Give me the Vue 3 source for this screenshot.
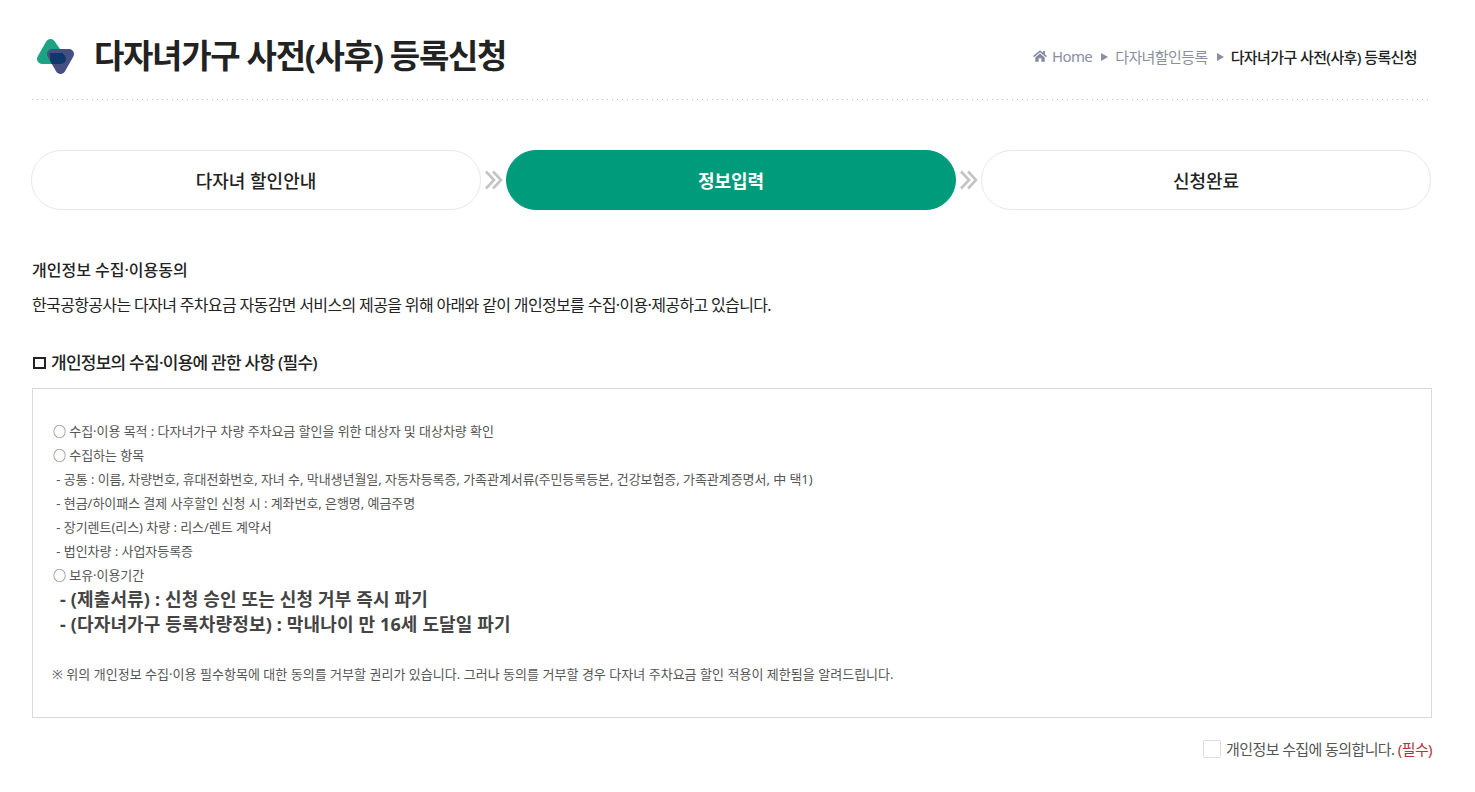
<template>
  <div class="page">
    <header class="page-head">
      <div class="title-wrap">
        <svg class="logo" width="38" height="37" viewBox="0 0 38 37">
          <defs>
            <mask id="tealArea">
              <path d="M13.5 6 L5 21 L24 21 Z" fill="#fff" stroke="#fff" stroke-width="10" stroke-linejoin="round"/>
            </mask>
          </defs>
          <path d="M13.5 6 L5 21 L24 21 Z" fill="#1da583" stroke="#1da583" stroke-width="10" stroke-linejoin="round"/>
          <path d="M15 16 L32 16 L23.5 31 Z" fill="#454f82" stroke="#454f82" stroke-width="10" stroke-linejoin="round"/>
          <path d="M15 16 L32 16 L23.5 31 Z" fill="#0f3768" stroke="#0f3768" stroke-width="10" stroke-linejoin="round" mask="url(#tealArea)"/>
        </svg>
        <h1>다자녀가구 사전(사후) 등록신청</h1>
      </div>
      <nav class="crumbs">
        <svg class="home" width="14" height="12" viewBox="0 0 15 13">
          <path d="M7.5 0.3 L10.8 3 L10.8 1 L12.8 1 L12.8 4.7 L15 6.6 L14 7.8 L7.5 2.4 L1 7.8 L0 6.6 Z M2.4 8 L7.5 3.8 L12.6 8 L12.6 12.8 L9 12.8 L9 9 L6 9 L6 12.8 L2.4 12.8 Z" fill="#818a9c"/>
        </svg>
        <span>Home</span>
        <i class="tri"></i>
        <span>다자녀할인등록</span>
        <i class="tri"></i>
        <span class="now">다자녀가구 사전(사후) 등록신청</span>
      </nav>
    </header>

    <ol class="steps">
      <template v-for="(s, i) in steps" :key="s">
        <li class="step" :class="{ on: i === 1 }">{{ s }}</li>
        <li v-if="i < steps.length - 1" class="gap">
          <svg width="18" height="20" viewBox="0 0 18 20" fill="none" stroke="#c4c4c4" stroke-width="2.6">
            <path d="M1 1.5 L9 10 L1 18.5"/>
            <path d="M8 1.5 L16 10 L8 18.5"/>
          </svg>
        </li>
      </template>
    </ol>

    <section class="intro">
      <h2>개인정보 수집·이용동의</h2>
      <p>한국공항공사는 다자녀 주차요금 자동감면 서비스의 제공을 위해 아래와 같이 개인정보를 수집·이용·제공하고 있습니다.</p>
    </section>

    <h3 class="sub"><i class="sq"></i>개인정보의 수집·이용에 관한 사항 (필수)</h3>

    <div class="terms">
      <p v-for="line in lines" :key="line">{{ line }}</p>
      <p class="big">- (제출서류) : 신청 승인 또는 신청 거부 즉시 파기</p>
      <p class="big">- (다자녀가구 등록차량정보) : 막내나이 만 16세 도달일 파기</p>
      <p class="note">※ 위의 개인정보 수집·이용 필수항목에 대한 동의를 거부할 권리가 있습니다. 그러나 동의를 거부할 경우 다자녀 주차요금 할인 적용이 제한됨을 알려드립니다.</p>
    </div>

    <label class="agree">
      <input type="checkbox" />
      <span>개인정보 수집에 동의합니다. <em>(필수)</em></span>
    </label>
  </div>
</template>

<script setup>
const steps = ['다자녀 할인안내', '정보입력', '신청완료']

const lines = [
  '○ 수집·이용 목적 : 다자녀가구 차량 주차요금 할인을 위한 대상자 및 대상차량 확인',
  '○ 수집하는 항목',
  ' - 공통 : 이름, 차량번호, 휴대전화번호, 자녀 수, 막내생년월일, 자동차등록증, 가족관계서류(주민등록등본, 건강보험증, 가족관계증명서, 中 택1)',
  ' - 현금/하이패스 결제 사후할인 신청 시 : 계좌번호, 은행명, 예금주명',
  ' - 장기렌트(리스) 차량 : 리스/렌트 계약서',
  ' - 법인차량 : 사업자등록증',
  '○ 보유·이용기간'
]
</script>

<style>
html, body { margin: 0; background: #fff; }
</style>

<style scoped>
.page {
  width: 1400px;
  padding: 0 43px 0 32px;
  font-family: "Noto Sans", "Noto Sans CJK KR", sans-serif;
  color: #222;
}

.page-head {
  height: 100px;
  display: flex;
  align-items: center;
  justify-content: space-between;
  padding: 0 15px 0 5px;
  background: linear-gradient(to right, #c4c4c4 1px, transparent 1px) left bottom / 5px 1px repeat-x;
}
.title-wrap { display: flex; align-items: center; gap: 19px; margin-top: 12px; }
.title-wrap h1 {
  margin: 0;
  font-size: 33px;
  font-weight: 700;
  letter-spacing: -1.3px;
  line-height: 40px;
  color: #222;
}
.crumbs {
  display: flex;
  align-items: center;
  font-size: 15px;
  letter-spacing: -0.6px;
  color: #8a8f9f;
  margin-top: 12px;
}
.home { margin-right: 5px; }
.tri {
  width: 0;
  height: 0;
  margin: 2px 7px 0 9px;
  border-left: 7px solid #8a8f9f;
  border-top: 4px solid transparent;
  border-bottom: 4px solid transparent;
}
.now { color: #222; font-weight: 500; }

.steps {
  list-style: none;
  margin: 50px 0 0 -1px;
  padding: 0;
  display: flex;
  align-items: center;
}
.step {
  width: 450px;
  height: 60px;
  box-sizing: border-box;
  border: 1px solid #e8e8e8;
  border-radius: 30px;
  display: flex;
  align-items: center;
  justify-content: center;
  font-size: 18px;
  font-weight: 500;
}
.step.on {
  background: #009b7b;
  border-color: #009b7b;
  color: #fff;
  font-weight: 700;
}
.gap { width: 25px; display: flex; justify-content: center; }

.intro { margin-top: 45px; }
.intro h2 {
  margin: 0;
  font-size: 16px;
  font-weight: 500;
  line-height: 30px;
}
.intro p {
  margin: 5px 0 0;
  font-size: 16px;
  line-height: 30px;
  letter-spacing: -0.65px;
}

.sub {
  display: flex;
  align-items: center;
  margin: 28px 0 0;
  font-size: 17px;
  font-weight: 500;
  line-height: 30px;
  letter-spacing: -0.75px;
}
.sq {
  width: 9px;
  height: 8px;
  border: 2px solid #222;
  margin: 0 5px 0 1px;
}

.terms {
  margin-top: 10px;
  height: 330px;
  box-sizing: border-box;
  border: 1px solid #d9d9d9;
  padding: 30px 20px 0;
  font-size: 13px;
  color: #555;
}
.terms p {
  margin: 0;
  line-height: 24px;
  white-space: pre;
  letter-spacing: -0.05px;
}
.terms .big {
  font-size: 18px;
  font-weight: 700;
  color: #444;
  line-height: 25px;
  padding-left: 7px;
  letter-spacing: 0.15px;
}
.terms .note { margin-top: 25px; margin-left: -1px; letter-spacing: 0.03px; }

.agree {
  display: flex;
  align-items: center;
  justify-content: flex-end;
  margin-top: 20px;
  font-size: 15px;
  letter-spacing: -0.6px;
  color: #555;
}
.agree input {
  appearance: none;
  width: 18px;
  height: 18px;
  margin: 0 5px 0 0;
  border: 1px solid #ddd;
  border-radius: 2px;
  background: #fff;
}
.agree em { font-style: normal; color: #b5343c; }
</style>
